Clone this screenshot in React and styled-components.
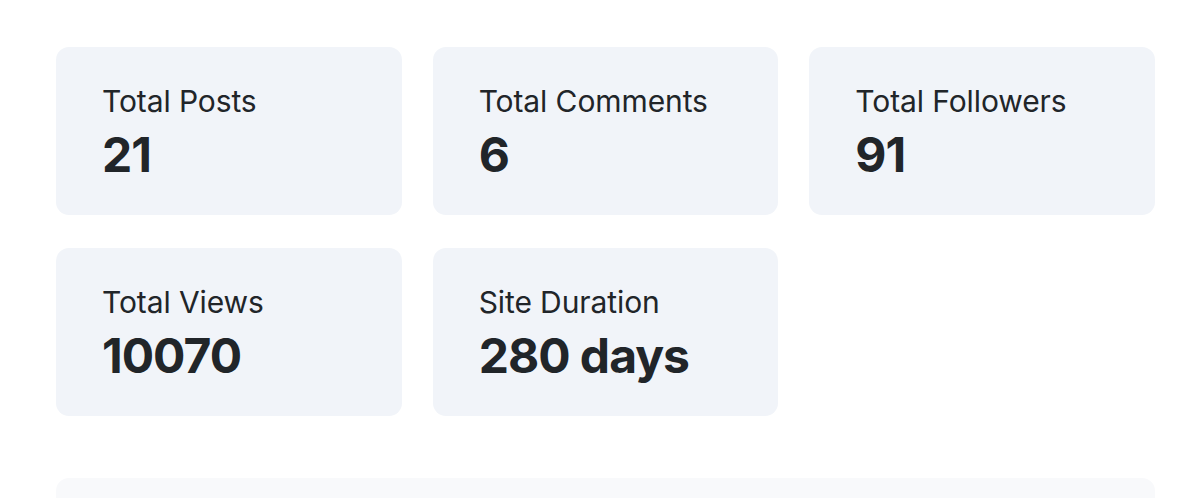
import React from "react";
import styled, { createGlobalStyle } from "styled-components";

const GlobalStyle = createGlobalStyle`
  html, body {
    margin: 0;
    padding: 0;
    background: #ffffff;
    font-family: Inter, "Noto Sans", "Liberation Sans", sans-serif;
    color: #212529;
  }
`;

const stats = [
  { label: "Total Posts", value: "21" },
  { label: "Total Comments", value: "6" },
  { label: "Total Followers", value: "91" },
  { label: "Total Views", value: "10070" },
  { label: "Site Duration", value: "280 days" },
];

function App() {
  return (
    <>
      <GlobalStyle />
      <Page>
        <StatGrid>
          {stats.map((s) => (
            <StatCard key={s.label}>
              <StatLabel>{s.label}</StatLabel>
              <StatValue>{s.value}</StatValue>
            </StatCard>
          ))}
        </StatGrid>
        <Panel />
      </Page>
    </>
  );
}

const Page = styled.div`
  padding: 47px 45px 0 56px;
  display: flex;
  flex-direction: column;
  gap: 62px;
`;

const StatGrid = styled.div`
  display: grid;
  grid-template-columns: repeat(3, 1fr);
  column-gap: 31px;
  row-gap: 33px;
`;

const StatCard = styled.div`
  height: 168px;
  box-sizing: border-box;
  background-color: #f1f4f9;
  border-radius: 13px;
  padding: 36px 46px 0;
  display: flex;
  flex-direction: column;
  gap: 7px;
`;

const StatLabel = styled.span`
  font-size: 30px;
  font-weight: 400;
  line-height: 36px;
  letter-spacing: -0.1px;
  color: #212529;
`;

const StatValue = styled.span`
  font-size: 48px;
  font-weight: 700;
  line-height: 58px;
  letter-spacing: -1px;
  color: #212529;
`;

const Panel = styled.div`
  height: 20px;
  background-color: #f8f9fb;
  border-radius: 13px 13px 0 0;
`;

export default App;
